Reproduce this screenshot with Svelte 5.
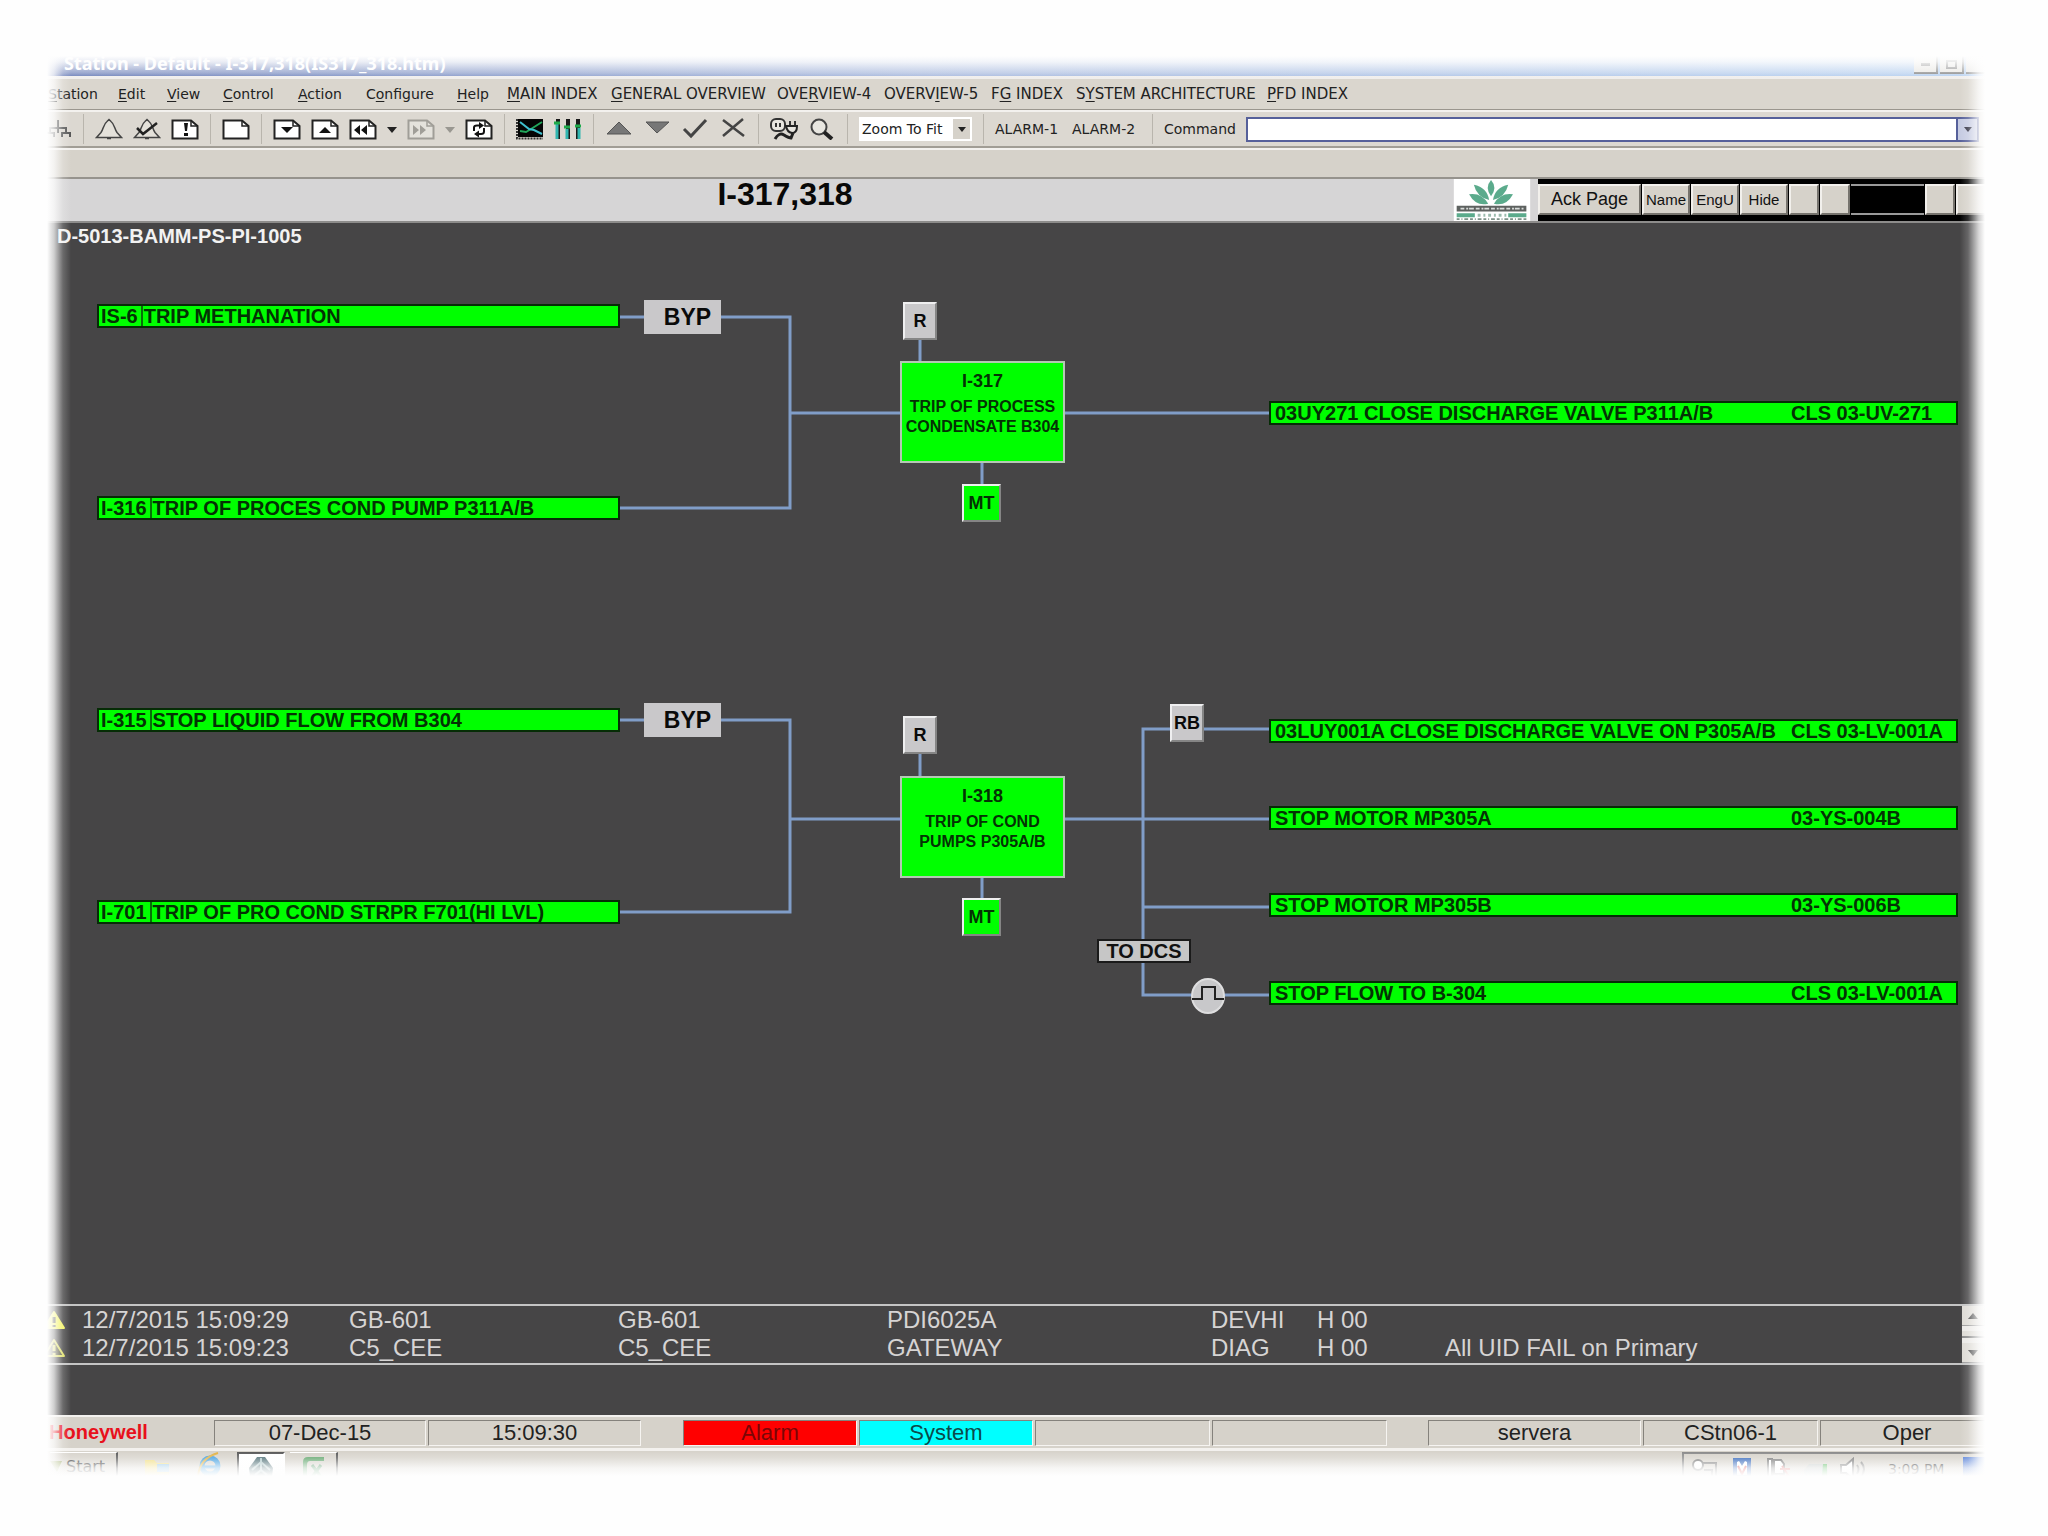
<script>
  const menu = [
    ['', 'S', 'tation'], ['', 'E', 'dit'], ['', 'V', 'iew'], ['', 'C', 'ontrol'],
    ['', 'A', 'ction'], ['C', 'o', 'nfigure'], ['', 'H', 'elp']
  ];
  const pages = [
    ['', 'M', 'AIN INDEX'], ['', 'G', 'ENERAL OVERVIEW'], ['OVE', 'R', 'VIEW-4'],
    ['OVERV', 'I', 'EW-5'], ['F', 'G', ' INDEX'], ['S', 'Y', 'STEM ARCHITECTURE'], ['', 'P', 'FD INDEX']
  ];
  const toolbar = [
    ['bell', 'bell-check', 'page-alert'],
    ['page'],
    ['page-down', 'page-up', 'page-back', 'more', 'page-next', 'more-off', 'page-reload'],
    ['trend', 'bars'],
    ['up', 'down', 'check', 'cross'],
    ['plug', 'magnifier']
  ];
  const causes = [
    { y: 81, code: 'IS-6', text: 'TRIP METHANATION' },
    { y: 273, code: 'I-316', text: 'TRIP OF PROCES COND PUMP P311A/B' },
    { y: 485, code: 'I-315', text: 'STOP LIQUID FLOW FROM B304' },
    { y: 677, code: 'I-701', text: 'TRIP OF PRO COND STRPR F701(HI LVL)' }
  ];
  const effects = [
    { y: 178, text: '03UY271 CLOSE DISCHARGE VALVE P311A/B', tag: 'CLS 03-UV-271' },
    { y: 496, text: '03LUY001A CLOSE DISCHARGE VALVE ON P305A/B', tag: 'CLS 03-LV-001A' },
    { y: 583, text: 'STOP MOTOR MP305A', tag: '03-YS-004B' },
    { y: 670, text: 'STOP MOTOR MP305B', tag: '03-YS-006B' },
    { y: 758, text: 'STOP FLOW TO B-304', tag: 'CLS 03-LV-001A' }
  ];
  const blocks = [
    { y: 138, id: 'I-317', lines: ['TRIP OF PROCESS', 'CONDENSATE B304'] },
    { y: 553, id: 'I-318', lines: ['TRIP OF COND', 'PUMPS P305A/B'] }
  ];
  const keys = [
    { kind: 'byp', x: 604, y: 77, text: 'BYP' },
    { kind: 'byp', x: 604, y: 480, text: 'BYP' },
    { kind: 'small', x: 863, y: 79, text: 'R' },
    { kind: 'small', x: 863, y: 493, text: 'R' },
    { kind: 'small', x: 1130, y: 481, text: 'RB' },
    { kind: 'mt', x: 922, y: 261, text: 'MT' },
    { kind: 'mt', x: 922, y: 675, text: 'MT' }
  ];
  const alarms = [
    { solid: true, cells: ['12/7/2015 15:09:29', 'GB-601', 'GB-601', 'PDI6025A', 'DEVHI', 'H 00', ''] },
    { solid: false, cells: ['12/7/2015 15:09:23', 'C5_CEE', 'C5_CEE', 'GATEWAY', 'DIAG', 'H 00', 'All UID FAIL on Primary'] }
  ];
</script>

{#snippet icon(name)}
  <svg class="icon" class:narrow={name.startsWith('more')} viewBox={name.startsWith('more') ? '0 0 10 22' : '0 0 28 22'} aria-hidden="true">
    {#if name.startsWith('page')}
      <g fill="none" stroke={name === 'page-next' ? '#a09e98' : '#222'} stroke-width="2">
        <path d="M1.500 2.500H20L26.500 8V20.500H1.500Z" fill={name === 'page-next' ? '#e4e2dc' : '#fff'} />
        <path d="M20 2.500V8H26.500" stroke-width="1.500" />
      </g>
      {#if name === 'page-alert'}
        <path d="M13 5h4l-1 8h-2zM13 15h4v3h-4z" fill="#111" />
      {:else if name === 'page-down'}
        <path d="M8 9h12l-6 6z" fill="#111" />
      {:else if name === 'page-up'}
        <path d="M8 15h12l-6-6z" fill="#111" />
      {:else if name === 'page-back'}
        <path d="M11 7v10l-6-5zM18 7v10l-6-5z" fill="#111" />
      {:else if name === 'page-next'}
        <path d="M6 7v10l6-5zM13 7v10l6-5z" fill="#a09e98" />
      {:else if name === 'page-reload'}
        <path d="M9 13V9.500Q9 7.500 12 7.500H15M19 10v3.500Q19 16 16 16H13" fill="none" stroke="#111" stroke-width="2" />
        <path d="M14 4l5 3.500-5 3.500zM14 12.500l-5 3.500 5 3.500z" fill="#111" />
      {/if}
    {:else if name.startsWith('bell')}
      <path d="M1.500 19.500 6 14.500C8.500 11 8.500 6 12 3.500L14 1.500 16 3.500C19.500 6 19.500 11 22 14.500L26.500 19.500ZM12 20.500h4" fill="#e4e1da" stroke="#444" stroke-width="1.500" />
      {#if name === 'bell-check'}
        <path d="M4 10 10 16 24 5" fill="none" stroke="#222" stroke-width="2.500" />
      {/if}
    {:else if name === 'sitemap'}
      <path d="M12 2v8M4 16V10H20V16M0 18V15H8V19M16 19v-4h8v4M12 10v5" fill="none" stroke="#555" stroke-width="2" />
    {:else if name === 'more'}
      <path d="M0 9h10l-5 6z" fill="#222" />
    {:else if name === 'more-off'}
      <path d="M0 9h10l-5 6z" fill="#999791" />
    {:else if name === 'trend'}
      <path d="M2 1h25v18H2z" fill="#050505" />
      <path d="M1 1v19.500h26" fill="none" stroke="#333" stroke-width="2" stroke-dasharray="2 1" />
      <path d="M4 13 10 14 15 11 26 4" fill="none" stroke="#21a65a" stroke-width="2" />
      <path d="M4 4 13 11 18 12 26 16" fill="none" stroke="#3fc0cf" stroke-width="2" />
    {:else if name === 'bars'}
      <path d="M4 1v20M14 1v20M24 1v20" stroke="#1a1a1a" stroke-width="4" />
      <path d="M3 6v15M13 11v10M25 10v11" stroke="#31b6b0" stroke-width="3" />
      <path d="M0 5h6M10 9h6M21 8h6" stroke="#1faa4a" stroke-width="3" />
    {:else if name === 'up'}
      <path d="M2 16h24L14 4z" fill="#777" stroke="#555" />
    {:else if name === 'down'}
      <path d="M3 4h23L14 15z" fill="#777" stroke="#555" />
    {:else if name === 'check'}
      <path d="M3 11 10 18 25 2" fill="none" stroke="#444" stroke-width="3" />
    {:else if name === 'cross'}
      <path d="M4 2 25 18M24 1 4 18" fill="none" stroke="#444" stroke-width="2.500" />
    {:else if name === 'plug'}
      <rect x="1" y="1" width="14" height="12" rx="5" fill="#e8e6e0" stroke="#333" stroke-width="2" />
      <path d="M6 5v4M10 5v4M20 3v5M25 3v5" stroke="#333" stroke-width="2" />
      <path d="M16 8H27Q27 15 22 15Q17 14 16 8Z" fill="#e8e6e0" stroke="#222" stroke-width="2" />
      <path d="M5 21Q9 14 14 17T21 20L23 15" fill="none" stroke="#222" stroke-width="3" />
    {:else if name === 'magnifier'}
      <circle cx="11" cy="9" r="7.500" fill="#e8e6e0" stroke="#444" stroke-width="2" />
      <path d="M16 14 24 21" stroke="#222" stroke-width="4" />
    {/if}
  </svg>
{/snippet}

<main class="window">
  <header class="titlebar">
    <h1>Station - Default - I-317,318(IS317_318.htm)</h1>
    <div class="controls">
      <button aria-label="Minimize"><i class="min"></i></button>
      <button aria-label="Restore"><i class="max"></i></button>
      <button aria-label="Close"></button>
    </div>
  </header>

  <nav class="menubar">
    {#each menu as [a, k, b]}<button>{a}<u>{k}</u>{b}</button>{/each}
    {#each pages as [a, k, b]}<button class="caps">{a}<u>{k}</u>{b}</button>{/each}
  </nav>

  <div class="toolbar">
    <div class="group first"><button aria-label="sitemap">{@render icon('sitemap')}</button></div>
    {#each toolbar as group}
      <div class="group">
        {#each group as name}<button aria-label={name}>{@render icon(name)}</button>{/each}
      </div>
    {/each}
    <div class="group">
      <div class="zoom">
        <select aria-label="Zoom"><option>Zoom To Fit</option></select>
        <span class="arrow"><svg viewBox="0 0 10 6" aria-hidden="true"><path d="M0 0h10L5 6z" fill="#222" /></svg></span>
      </div>
    </div>
    <div class="group alarm-links"><button>ALARM-1</button><button>ALARM-2</button></div>
    <div class="group command">
      <label for="command">Command</label>
      <div class="field">
        <input id="command" type="text" />
        <button aria-label="Command history"><svg viewBox="0 0 10 6" aria-hidden="true"><path d="M0 0h10L5 6z" fill="#334" /></svg></button>
      </div>
    </div>
  </div>

  <div class="message"></div>

  <section class="heading">
    <h2>I-317,318</h2>
    <svg class="logo" viewBox="0 0 80 44" role="img" aria-label="Company logo">
      <rect width="80" height="44" fill="#fff" />
      <g fill="#5bab8c">
        <path d="M39 1Q46 9 39 18Q32 9 39 1Z" />
        <path d="M21 6Q35 9 37 22Q24 19 21 6Z" />
        <path d="M57 6Q43 9 41 22Q54 19 57 6Z" />
        <path d="M16 16Q29 14 36 26Q23 29 16 16Z" />
        <path d="M62 16Q49 14 42 26Q55 29 62 16Z" />
        <path d="M3 36h19v4H3zM57 36h19v4H57z" />
      </g>
      <path d="M3 28h73v6H3z" fill="#5e6260" />
      <path d="M7 31h66" stroke="#d8dcda" stroke-width="2" stroke-dasharray="4 2 2 1 5 2" />
      <path d="M25 38h30" stroke="#9cbcae" stroke-width="3" stroke-dasharray="3 3 2 3" />
      <path d="M3 42h73" stroke="#7d9288" stroke-width="2" stroke-dasharray="3 2 1 2 4 2" />
    </svg>
    <div class="pagekeys">
      <button class="ack">Ack Page</button>
      <button>Name</button>
      <button>EngU</button>
      <button>Hide</button>
      <span class="blank"></span>
      <span class="blank"></span>
      <span class="screen"></span>
      <span class="blank"></span>
      <span class="blank last"></span>
    </div>
  </section>

  <section class="diagram">
    <p class="drawing">D-5013-BAMM-PS-PI-1005</p>
    <svg class="wires" width="1954" height="860" aria-hidden="true">
      <g fill="none" stroke="#809dc8" stroke-width="3">
        <path d="M580 94H750V285H580M750 190H861M1025 190H1230M880 116V138M942 240V262" />
        <path d="M580 497H750V689H580M750 596H861M1025 596H1230M880 530V554M942 654V676" />
        <path d="M1230 506H1103V772H1230M1103 684H1230" />
      </g>
      <ellipse cx="1168" cy="773" rx="16" ry="17" fill="#c8c8ca" stroke="#dededf" stroke-width="2" />
      <path d="M1152 776H1162V764H1175V776H1184" fill="none" stroke="#222" stroke-width="2" />
    </svg>

    {#each causes as c}
      <div class="tag cause" style:top="{c.y}px"><span class="code">{c.code}</span><span>{c.text}</span></div>
    {/each}
    {#each effects as e}
      <div class="tag effect" style:top="{e.y}px"><span>{e.text}</span><span>{e.tag}</span></div>
    {/each}
    {#each blocks as b}
      <div class="block" style:top="{b.y}px">
        <strong>{b.id}</strong>
        {#each b.lines as line}<span>{line}</span>{/each}
      </div>
    {/each}
    {#each keys as k}
      <button class="key {k.kind}" style:left="{k.x}px" style:top="{k.y}px">{k.text}</button>
    {/each}
    <div class="dcs">TO DCS</div>
  </section>

  <section class="alarms">
    <table>
      <tbody>
        {#each alarms as row}
          <tr>
            <td class="mark">
              <svg viewBox="0 0 24 20" role="img" aria-label="Alarm">
                <path d="M12 2 22 18H2Z" fill={row.solid ? '#f4f45a' : '#55553c'} stroke={row.solid ? '#f4f45a' : '#dede62'} stroke-width="2" stroke-linejoin="round" />
                <path d="M12 7v6M12 15v2" stroke={row.solid ? '#333' : '#dede62'} stroke-width="3" />
              </svg>
            </td>
            {#each row.cells as cell}<td>{cell}</td>{/each}
          </tr>
        {/each}
      </tbody>
    </table>
    <div class="scroll">
      <button aria-label="Scroll up"><svg viewBox="0 0 10 6"><path d="M0 6h10L5 0z" fill="#444" /></svg></button>
      <i></i>
      <button aria-label="Scroll down"><svg viewBox="0 0 10 6"><path d="M0 0h10L5 6z" fill="#444" /></svg></button>
    </div>
  </section>
  <div class="spacer"></div>

  <footer class="status">
    <span class="brand">Honeywell</span>
    <span class="cell">07-Dec-15</span>
    <span class="cell">15:09:30</span>
    <span></span>
    <span class="cell red">Alarm</span>
    <span class="cell cyan">System</span>
    <span class="cell"></span>
    <span class="cell"></span>
    <span></span>
    <span class="cell">servera</span>
    <span class="cell">CStn06-1</span>
    <span class="cell">Oper</span>
  </footer>

  <div class="taskbar">
    <button class="start"><svg viewBox="0 0 12 12" aria-hidden="true"><path d="M0 0h12L7 11z" fill="#8a9a4a" /></svg>Start</button>
    <svg class="launch" viewBox="0 0 26 26" aria-hidden="true"><path d="M1 8h9l3 3h12v12H1z" fill="#f0dc7c" /><path d="M13 12h12v8H13z" fill="#8ec3e6" /></svg>
    <svg class="launch ie" viewBox="0 0 26 26" aria-hidden="true"><circle cx="14" cy="14" r="8" fill="none" stroke="#3a9be0" stroke-width="5" /><path d="M7 15h14" stroke="#3a9be0" stroke-width="3" /><path d="M2 24Q4 6 22 1" fill="none" stroke="#e0b040" stroke-width="2" /></svg>
    <button class="task active" aria-label="Station"><svg viewBox="0 0 26 26" aria-hidden="true"><path d="M9 1h8l8 11-1 9-6 3H8l-6-3-1-9Z" fill="#46686f" /><path d="M4 14l9-8 9 8M7 19l6-5 6 5M13 2v12" fill="none" stroke="#a9c4c6" stroke-width="2" /></svg></button>
    <button class="task" aria-label="Spreadsheet"><svg viewBox="0 0 26 26" aria-hidden="true"><path d="M3 24V7Q3 2 8 2H24V6H10Q7 6 7 10V24" fill="#5ca368" /><path d="M12 10 21 22M21 10 12 22" stroke="#4c9460" stroke-width="3" /></svg></button>
    <div class="tray">
      <svg viewBox="0 0 26 26" aria-hidden="true"><path d="M9 6h15v16H9" fill="none" stroke="#777" stroke-width="2" /><circle cx="6" cy="8" r="5" fill="#fff" stroke="#777" stroke-width="2" /><path d="M12 13h8v9" stroke="#777" fill="none" stroke-width="2" /></svg>
      <svg viewBox="0 0 26 26" aria-hidden="true"><path d="M4 1h18v18l-9 7-9-7z" fill="#2d62b8" /><path d="M8 5l2-1 3 5 3-5 2 1v13H8z" fill="#fff" /><path d="M9 9l4 8 4-8" fill="none" stroke="#d33" stroke-width="2" /></svg>
      <svg viewBox="0 0 26 26" aria-hidden="true"><path d="M2 2h4v18H2zM8 3h7l3 4v10H8z" fill="#fff" stroke="#777" stroke-width="2" /><path d="M14 12h10M14 19h10M16 9l8 12" stroke="#d66" stroke-width="2" /></svg>
      <svg viewBox="0 0 26 26" aria-hidden="true"><path d="M1 13 6 7H22L25 13V20H1Z" fill="#c3c8c6" /><path d="M20 7h4v12h-5z" fill="#48b34e" /></svg>
      <svg viewBox="0 0 26 26" aria-hidden="true"><path d="M1 8h5l7-6v20l-7-6H1z" fill="#fff" stroke="#777" stroke-width="2" /><path d="M17 8q3 4 0 9M21 5q6 7 0 15" fill="none" stroke="#777" stroke-width="2" /></svg>
      <time>3:09 PM</time>
      <i class="edge"></i>
    </div>
  </div>
</main>

<style>
  :global(body) { margin: 0; background: #fefefe; }
  * { box-sizing: border-box; }
  button, input, select {
    margin: 0; padding: 0; border: 0; border-radius: 0; background: none;
    font: inherit; color: inherit; appearance: none;
  }
  h1, h2, p { margin: 0; }
  svg { display: block; }

  .window {
    position: relative;
    margin: 44px 54px 56px 40px;
    overflow: hidden;
    background: #d6d2ca;
    color: #222;
    font: 14px "DejaVu Sans", sans-serif;
    white-space: nowrap;
  }
  .window::after {
    content: "";
    position: absolute;
    inset: 0;
    pointer-events: none;
    background:
      linear-gradient(to right, #fefefe 7px, rgb(254 254 254 / 75%) 14px, rgb(254 254 254 / 20%) 23px, transparent 31px),
      linear-gradient(to left, #fefefe 9px, rgb(254 254 254 / 80%) 15px, rgb(254 254 254 / 18%) 26px, transparent 34px),
      linear-gradient(to bottom, #fefefe 12px, rgb(254 254 254 / 85%) 18px, rgb(254 254 254 / 35%) 29px, transparent 34px),
      linear-gradient(to top, #fefefe 3px, rgb(254 254 254 / 80%) 11px, rgb(254 254 254 / 25%) 21px, transparent 28px);
  }

  .titlebar {
    display: flex;
    align-items: flex-end;
    justify-content: space-between;
    height: 35px;
    padding: 0 4px 0 24px;
    border-bottom: 3px solid #f0eeec;
    background: linear-gradient(to right, #6478b4, #a4b6dc 45%, #b4cff0);
  }
  h1 { font: bold 18px/26px "Noto Sans", sans-serif; color: #fff; }
  .controls { display: flex; gap: 2px; padding-bottom: 2px; }
  .controls button {
    display: grid; place-items: center; width: 24px; height: 18px;
    border-right: 2px solid #777; border-bottom: 2px solid #777; background: #e6e4e0;
  }
  .min { width: 9px; height: 3px; background: #777; }
  .max { width: 11px; height: 9px; border: 2px solid #777; }

  .menubar {
    display: grid;
    grid-template-columns: 70px 49px 56px 75px 68px 91px 50px 104px 166px 107px 107px 85px 191px 1fr;
    height: 31px;
    padding-left: 8px;
    border-bottom: 1px solid #9a968e;
    background: #dad6ce;
  }
  .menubar button { text-align: left; }
  .menubar .caps { font-size: 15px; }
  u { text-underline-offset: 2px; }

  .toolbar {
    display: flex;
    align-items: center;
    height: 38px;
    padding-right: 15px;
    border-top: 2px solid #f3f1ee;
    border-bottom: 2px solid #a19d95;
    background: #dcd8d1;
  }
  .group {
    display: flex; align-items: center; gap: 10px; height: 30px;
    padding: 0 11px 0 10px; border-left: 1px solid #b9b5ad;
  }
  .group:not(.first) { padding-left: 11px; }
  .group.first { width: 43px; padding: 0 6px; border-left: 0; }
  .icon { width: 28px; height: 22px; }
  .icon.narrow { width: 10px; }
  .zoom { display: flex; width: 113px; height: 24px; border: 2px solid #fff; background: #fff; }
  .zoom select { flex: 1; min-width: 0; padding-left: 1px; }
  .arrow { display: grid; place-items: center; width: 17px; background: #d6d2ca; }
  .arrow svg, .field svg { width: 8px; height: 5px; }
  .alarm-links { gap: 14px; width: 169px; }
  .command.group { flex: 1; padding-right: 0; }
  .field { display: flex; flex: 1; height: 25px; border: 2px solid #56609a; background: #fff; }
  .field input { flex: 1; min-width: 0; padding: 0 4px; }
  .field button {
    display: grid; place-items: center; width: 21px;
    border-left: 2px solid #56609a; background: #c6cbe2;
  }
  .message { height: 31px; border-top: 2px solid #f3f1ee; border-bottom: 2px solid #96938d; }

  .heading {
    display: grid;
    grid-template-columns: 1fr 80px 456px;
    column-gap: 6px;
    height: 44px;
    border-bottom: 2px solid #8d8c8b;
    background: #d6d5d6;
    font-family: "Liberation Sans", sans-serif;
  }
  h2 { padding-left: 84px; text-align: center; font-size: 32px; line-height: 30px; color: #080808; }
  .logo { width: 80px; height: 42px; }
  .pagekeys { display: flex; gap: 1px; padding: 5px 0 6px; background: #000; }
  .pagekeys button, .blank {
    width: 48px; border: 2px solid; border-color: #f2f0ec #76736d #76736d #f2f0ec;
    background: #d6d2ca; font-size: 15px; color: #111;
  }
  .pagekeys .ack { width: 103px; font-size: 18px; }
  .pagekeys .blank { width: 30px; }
  .pagekeys .last { flex: 1; }
  .screen { width: 73px; border-top: 2px solid #9a9a9a; border-bottom: 2px solid #9a9a9a; }

  .diagram {
    position: relative;
    height: 1081px;
    background: #464546;
    font: bold 20px "Liberation Sans", sans-serif;
  }
  .drawing { padding: 1px 0 0 17px; line-height: 24px; color: #f2f2f2; }
  .wires { position: absolute; top: 0; left: 0; }
  .tag, .dcs {
    position: absolute; height: 24px; border: 2px solid #062c06;
    background: #00ff00; color: #043204; line-height: 20px;
  }
  .cause { left: 57px; display: flex; width: 523px; }
  .code { margin-right: 1px; padding: 0 3px 0 2px; border-right: 2px solid #087008; }
  .effect { left: 1229px; display: grid; grid-template-columns: 516px 1fr; width: 689px; padding-left: 4px; }
  .dcs { left: 1057px; top: 716px; width: 94px; border-color: #1a1a1a; background: #c6c6c6; color: #111; text-align: center; }
  .block {
    position: absolute; left: 860px; display: flex; flex-direction: column; align-items: center;
    width: 165px; height: 102px; padding-top: 3px; border: 2px solid #b4c8b4;
    background: #00ff00; color: #043204; font-size: 16px; line-height: 20px;
  }
  .block strong { font-size: 18px; line-height: 31px; }
  .key { position: absolute; background: #c9c8ca; color: #0a0a0a; font-size: 18px; }
  .byp { width: 77px; height: 34px; padding-left: 10px; font-size: 23px; }
  .small, .mt { border: 2px solid; border-color: #efeff0 #858585 #858585 #efeff0; }
  .small { width: 34px; height: 38px; }
  .mt { width: 39px; height: 38px; background: #00ff00; color: #043204; }

  .alarms {
    display: flex;
    align-items: flex-start;
    justify-content: space-between;
    height: 61px;
    padding-right: 9px;
    border-top: 2px solid #c4c4c4;
    border-bottom: 2px solid #c4c4c4;
    background: #464546;
    font: 24px "Liberation Sans", sans-serif;
    color: #d6d4d4;
  }
  table { width: 1860px; table-layout: fixed; border-collapse: collapse; }
  td { height: 28px; padding: 0; line-height: 28px; }
  td:nth-child(1) { width: 42px; }
  td:nth-child(2) { width: 267px; }
  td:nth-child(3) { width: 269px; }
  td:nth-child(4) { width: 269px; }
  td:nth-child(5) { width: 324px; }
  td:nth-child(6) { width: 106px; }
  td:nth-child(7) { width: 128px; }
  .mark svg { width: 24px; height: 20px; margin-left: 2px; }
  .scroll { display: grid; grid-template-rows: 20px 1fr 20px; gap: 2px; width: 23px; height: 57px; background: #ebe9e6; }
  .scroll button { display: grid; place-items: center; border: 1px solid #999; border-width: 0 1px 1px 0; background: #dedbd5; }
  .scroll svg { width: 10px; height: 6px; }
  .scroll i { margin: 3px 0; border-bottom: 2px solid #888; background: #dedbd5; }
  .spacer { height: 50px; background: #464546; }

  .status {
    display: grid;
    grid-template-columns: 172fr 212fr 213fr 38fr 174fr 174fr 175fr 175fr 37fr 213fr 175fr 174fr;
    column-gap: 2px;
    padding: 3px 0 2px;
    border-top: 2px solid #f3f1ee;
    border-bottom: 3px solid #f3f1ee;
    font: 22px/24px "Liberation Sans", sans-serif;
  }
  .cell {
    height: 26px; border: 1px solid; border-color: #85827c #f6f4f1 #f6f4f1 #85827c;
    text-align: center;
  }
  .brand { padding-left: 9px; font-size: 20px; font-weight: bold; color: #e8101c; }
  .red { background: #ff0000; color: #7a0606; }
  .cyan { background: #00ffff; color: #0b4a4a; }

  .taskbar { display: flex; align-items: flex-start; height: 28px; padding: 1px 0 0 10px; }
  .start {
    display: flex; align-items: center; gap: 4px; width: 68px; height: 28px;
    border-top: 1px solid #fff; border-right: 2px solid #555; font-size: 16px; color: #333;
  }
  .start svg { width: 12px; height: 12px; }
  .launch { width: 26px; height: 26px; margin-left: 26px; }
  .launch.ie { margin-right: 15px; }
  .task {
    display: grid; justify-content: center; align-items: start; width: 48px; height: 28px;
    margin-right: 5px; padding-top: 2px; border-top: 1px solid #fff; border-right: 2px solid #555;
  }
  .task.active { border: 2px solid #555; border-right-color: #fff; background: #fff; }
  .task svg { width: 26px; height: 26px; }
  .tray {
    display: flex; gap: 11px; width: 312px; height: 28px; margin-left: auto; padding: 3px 0 0 8px;
    border-top: 2px solid #888; border-left: 2px solid #888; line-height: 24px;
  }
  .tray svg { width: 26px; height: 26px; flex: none; }
  .tray time { margin-left: 11px; }
  .edge { flex: 1; margin-left: 8px; background: #3c6cd0; }
</style>
